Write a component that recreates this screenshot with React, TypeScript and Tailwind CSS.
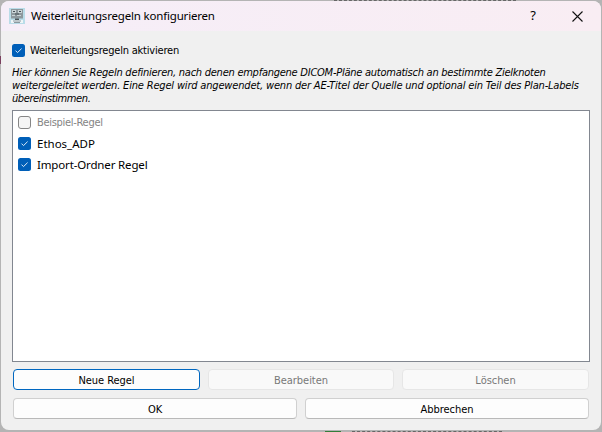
import type { ReactNode } from "react";

function Check({ on = true }: { on?: boolean }) {
  return on ? (
    <svg className="block h-[13px] w-[13px] shrink-0" viewBox="0 0 13 13">
      <rect width="13" height="13" rx="2.5" fill="#005fb8" />
      <path d="M3.5 6.6 5.5 8.6 9.6 4.6" fill="none" stroke="#dcebf8" strokeWidth="1" />
    </svg>
  ) : (
    <span className="block h-[13px] w-[13px] shrink-0 rounded-[3px] border border-[#868686] bg-[#f5f5f5]" />
  );
}

function DialogIcon() {
  return (
    <svg className="block h-4 w-4 shrink-0" viewBox="0 0 16 16">
      <rect width="16" height="16" fill="#b9dce8" />
      <rect x="2" y="1" width="12" height="9.5" fill="#8d989d" />
      <path d="M3 2h4v3H3zM9 2h4v3H9zM3 7h3v1H3zM8 7h4v1H8z" fill="#c9d3d6" />
      <path d="M4 3h2v1H4zM10 3h2v1h-2zM6 5.5h4v1H6z" fill="#444f55" />
      <path d="M6 10.5h4v1.5H6z" fill="#4c565b" />
      <path d="M2 12h12v3H2z" fill="#eef5f7" />
      <path d="M4 12.5h8v1H4zM5 14h6v1H5z" fill="#8b999f" />
    </svg>
  );
}

function Button({ children, kind = "normal", className = "" }: { children: ReactNode; kind?: "normal" | "focus" | "off"; className?: string }) {
  const look = {
    normal: "border-[#d0d0d0] border-b-[#b9b9b9] bg-[#fdfdfd] text-black",
    focus: "border-[#0067c0] bg-[#fdfdfd] text-black",
    off: "border-[#e6e6e6] bg-[#f9f9f9] text-[#787878]",
  }[kind];
  return (
    <button className={`flex h-[21px] items-center justify-center rounded-[4px] border pt-px text-[11px] leading-[13px] tracking-[-0.05px] ${look} ${className}`}>
      {children}
    </button>
  );
}

export default function App() {
  return (
    <div className="relative h-[432px] w-[602px] overflow-hidden bg-[#b4b4b4] pt-px pr-px pb-[2px] pl-px font-['DejaVu_Sans_Condensed','DejaVu_Sans',sans-serif] text-[11px] text-black">
      <div className="absolute bottom-0 left-[325px] h-px w-4 bg-[#347d3a]" />
      <div className="absolute bottom-0 left-[352px] w-[150px] border-b border-dashed border-[#666]" />
      <div className="absolute top-0 left-[334px] w-[182px] border-t border-dashed border-[#666]" />
      <div className="absolute top-[56px] left-0 h-2 w-px bg-[#79405e]" />
      <div className="relative flex h-[429px] w-[600px] flex-col overflow-hidden rounded-[8px] bg-[#f0f0f0]">
        <header className="flex h-[30px] shrink-0 items-center bg-linear-to-r from-[#f5eef8] to-[#f9edf3] pl-2 font-['Noto_Sans',sans-serif] text-[12px]">
          <DialogIcon />
          <span className="ml-[6px] w-[494px] text-[11.5px] leading-4 tracking-[-0.18px] whitespace-nowrap">Weiterleitungsregeln konfigurieren</span>
          <span className="-ml-[2px] w-5 text-center text-[13px]">?</span>
          <svg className="ml-[29px] h-[11px] w-[11px]" viewBox="0 0 11 11">
            <path d="M.5.5l10 10M10.5.5l-10 10" stroke="#111" strokeWidth="1.1" />
          </svg>
        </header>
        <main className="flex flex-col pr-[11px] pl-[11px] pt-[13px]">
          <label className="flex h-[13px] items-center gap-[5px] whitespace-nowrap">
            <Check />
            <span className="pt-[2px] tracking-[-0.2px]">Weiterleitungsregeln aktivieren</span>
          </label>
          <div className="mt-[9px] h-[39px] whitespace-nowrap leading-[13px] italic">
            <div className="tracking-[-0.25px]">Hier können Sie Regeln definieren, nach denen empfangene DICOM-Pläne automatisch an bestimmte Zielknoten</div>
            <div className="tracking-[-0.175px]">weitergeleitet werden. Eine Regel wird angewendet, wenn der AE-Titel der Quelle und optional ein Teil des Plan-Labels</div>
            <div className="tracking-[-0.4px]">übereinstimmen.</div>
          </div>
          <div className="mt-[5px] flex h-[252px] flex-col border border-[#828790] bg-white pt-px pl-[5px]">
            <label className="flex h-[21px] items-center gap-[6px] text-[#848484]">
              <Check on={false} />
              <span className="pt-[2px] tracking-[-0.3px]">Beispiel-Regel</span>
            </label>
            <label className="flex h-[21px] items-center gap-[6px] font-['Noto_Sans',sans-serif] text-[12px]">
              <Check />
              <span className="text-[11.5px] leading-4">Ethos_ADP</span>
            </label>
            <label className="flex h-[21px] items-center gap-[6px] font-['Noto_Sans',sans-serif] text-[12px]">
              <Check />
              <span className="text-[11.5px] leading-4 tracking-[-0.15px]">Import-Ordner Regel</span>
            </label>
          </div>
          <div className="mt-[7px] flex gap-2 pl-px">
            <Button kind="focus" className="w-[187px]">Neue Regel</Button>
            <Button kind="off" className="w-[186px]">Bearbeiten</Button>
            <Button kind="off" className="w-[187px]">Löschen</Button>
          </div>
          <div className="mt-2 flex gap-2 pl-px">
            <Button className="w-[284px]">OK</Button>
            <Button className="w-[284px]">Abbrechen</Button>
          </div>
        </main>
      </div>
    </div>
  );
}
